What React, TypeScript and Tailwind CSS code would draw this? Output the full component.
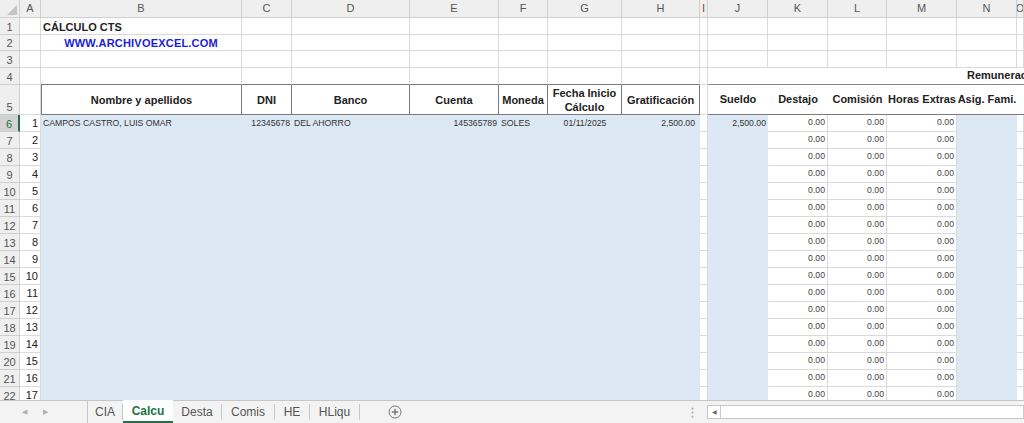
const COLS = ["A", "B", "C", "D", "E", "F", "G", "H", "I", "J", "K", "L", "M", "N", "O"];
const BLUE = new Set(["B", "C", "D", "E", "F", "G", "H", "J", "N"]);
const BOX = new Set(["B", "C", "D", "E", "F", "G", "H"]);
const REM = new Set(["J", "K", "L", "M", "N", "O"]);

const HEADERS: Record<string, string> = {
  B: "Nombre y apellidos",
  C: "DNI",
  D: "Banco",
  E: "Cuenta",
  F: "Moneda",
  G: "Fecha Inicio Cálculo",
  H: "Gratificación",
  J: "Sueldo",
  K: "Destajo",
  L: "Comisión",
  M: "Horas Extras",
  N: "Asig. Fami.",
};

const FIRST: Record<string, { text: string; align: string }> = {
  B: { text: "CAMPOS CASTRO, LUIS OMAR", align: "justify-start pl-[2px]" },
  C: { text: "12345678", align: "justify-end pr-[2px]" },
  D: { text: "DEL AHORRO", align: "justify-start pl-[2px]" },
  E: { text: "145365789", align: "justify-end pr-[2px]" },
  F: { text: "SOLES", align: "justify-start pl-[2px]" },
  G: { text: "01/11/2025", align: "justify-center" },
  H: { text: "2,500.00", align: "justify-end pr-[5px]" },
  J: { text: "2,500.00", align: "justify-end pr-[2px]" },
};

const rows = Array.from({ length: 22 }, (_, i) => i + 1);

const ColumnHeader = () => (
  <>
    <div className="relative border-r border-b border-[#cfcfcf] bg-[#efefef]">
      <div className="absolute right-[2px] bottom-[2px] h-0 w-0 border-l-[10px] border-t-[10px] border-l-transparent border-t-transparent border-b-[10px] border-b-[#c4c4c4]" />
    </div>
    {COLS.map((c) => (
      <div
        key={c}
        className="flex items-center justify-center overflow-hidden border-r border-b border-[#cfcfcf] bg-[#efefef] text-[11px] text-[#555]"
      >
        {c}
      </div>
    ))}
  </>
);

const RowHeader = ({ n }: { n: number }) => {
  const active = n === 6;
  return (
    <div
      className={`flex items-end justify-center border-b border-[#cfcfcf] pb-[1px] text-[11px] leading-none ${
        active
          ? "border-r-2 border-r-[#217346] bg-[#d3d3d3] text-[#217346]"
          : "border-r border-r-[#cfcfcf] bg-[#efefef] text-[#555]"
      }`}
    >
      {n}
    </div>
  );
};

const TopCell = ({ r, c }: { r: number; c: string }) => {
  if (r === 4 && c === "J") {
    return (
      <div
        style={{ gridColumn: "span 6" }}
        className="flex items-end overflow-hidden whitespace-nowrap border-b border-[#8a8a8a] pb-[1px] pl-[259px] text-[11px] font-bold text-[#222]"
      >
        Remuneraciones
      </div>
    );
  }
  if (r === 4 && REM.has(c)) return null;
  const bottom = r === 4 && BOX.has(c) ? "border-b-[#7a7a7a]" : "border-b-[#dadada]";
  let content: React.ReactNode = null;
  if (r === 1 && c === "B")
    content = (
      <span className="pl-[2px] text-[11px] font-bold text-[#222]">CÁLCULO CTS</span>
    );
  if (r === 2 && c === "B")
    content = (
      <span className="w-full text-center text-[11px] font-bold tracking-[0.2px] text-[#1c1cd8]">
        WWW.ARCHIVOEXCEL.COM
      </span>
    );
  return (
    <div
      className={`flex items-end border-r border-b border-r-[#dadada] pb-[1px] leading-none ${bottom}`}
    >
      {content}
    </div>
  );
};

const HeaderCell = ({ c }: { c: string }) => {
  if (c === "A")
    return <div className="border-r border-b border-[#dadada]" />;
  if (c === "I")
    return <div className="border-r border-b border-r-[#dadada] border-b-[#dadada]" />;
  const text = HEADERS[c];
  if (BOX.has(c)) {
    return (
      <div
        className={`flex items-center justify-center border-r border-b border-[#7a7a7a] px-[2px] text-center text-[11px] font-bold leading-[14px] text-[#222] ${
          c === "B" ? "border-l" : ""
        }`}
      >
        {text}
      </div>
    );
  }
  return (
    <div className="flex items-center justify-center whitespace-nowrap border-b border-[#7a7a7a] text-[11px] font-bold text-[#222]">
      {text ?? ""}
    </div>
  );
};

const DataCell = ({ r, c }: { r: number; c: string }) => {
  const idx = r - 5;
  if (c === "A") {
    return (
      <div className="flex items-center justify-end border-r border-b border-[#dadada] pr-[2px] text-[11px] text-[#222]">
        {idx}
      </div>
    );
  }
  if (BLUE.has(c)) {
    const f = r === 6 ? FIRST[c] : undefined;
    return (
      <div
        className={`flex items-center whitespace-nowrap bg-[#dce8f4] text-[8.7px] text-[#333] ${
          f ? f.align : ""
        }`}
      >
        {f?.text}
      </div>
    );
  }
  if (c === "K" || c === "L" || c === "M") {
    return (
      <div className="flex items-center justify-end border-r border-b border-[#dadada] pr-[2px] text-[8.7px] text-[#444]">
        0.00
      </div>
    );
  }
  return <div className="border-r border-b border-[#dadada]" />;
};

const Tabs = () => {
  const tabs = ["CIA", "Calcu", "Desta", "Comis", "HE", "HLiqu"];
  const widths: Record<string, string> = {
    CIA: "w-[35px]",
    Calcu: "w-[50px]",
    Desta: "w-[49px]",
    Comis: "w-[53px]",
    HE: "w-[35px]",
    HLiqu: "w-[50px]",
  };
  return (
    <div className="flex h-[23px] shrink-0 items-stretch border-t border-[#c6c6c6] bg-[#f3f3f3] text-[12px]">
      <div className="flex w-[87px] items-center gap-[16px] pl-[22px] text-[7px] text-[#b0b0b0]">
        <span>◀</span>
        <span>▶</span>
      </div>
      <div className="flex items-stretch border-l border-[#c6c6c6]">
        {tabs.map((t) =>
          t === "Calcu" ? (
            <div
              key={t}
              className={`-mt-px flex items-center justify-center border-b-2 border-[#217346] bg-white font-bold text-[#217346] ${widths[t]}`}
            >
              {t}
            </div>
          ) : (
            <div
              key={t}
              className={`my-[3px] flex items-center justify-center border-r border-[#c6c6c6] text-[#555] ${widths[t]}`}
            >
              {t}
            </div>
          )
        )}
      </div>
      <div className="flex w-[70px] items-center justify-center">
        <svg width="14" height="14" viewBox="0 0 14 14" fill="none" stroke="#777" strokeWidth="1">
          <circle cx="7" cy="7" r="6" />
          <path d="M7 3.8v6.4M3.8 7h6.4" strokeWidth="1.4" />
        </svg>
      </div>
      <div className="flex flex-1 items-center justify-end pr-[13px]">
        <svg width="3" height="11" viewBox="0 0 3 11" fill="#a8a8a8">
          <circle cx="1.5" cy="1.5" r="1" />
          <circle cx="1.5" cy="5.5" r="1" />
          <circle cx="1.5" cy="9.5" r="1" />
        </svg>
      </div>
      <div className="flex w-[317px] items-center">
        <div className="flex h-[14px] flex-1 items-stretch border border-[#c8c8c8] bg-white">
          <div className="flex w-[13px] items-center justify-center border-r border-[#c8c8c8] text-[6px] text-[#666]">
            ◀
          </div>
          <div className="flex-1" />
        </div>
      </div>
    </div>
  );
};

export default function App() {
  return (
    <div
      className="flex h-screen w-full flex-col overflow-hidden bg-white"
      style={{ fontFamily: '"Liberation Sans", Arial, sans-serif' }}
    >
      <div className="grid flex-1 grid-cols-[20px_21px_201px_50px_118px_89px_49px_74px_78px_8px_60px_60px_59px_70px_60px_1fr] grid-rows-[18px_17px_16px_17px_17px_30px_repeat(17,17px)] overflow-hidden">
        <ColumnHeader />
        {rows.map((r) => (
          <div key={r} className="contents">
            <RowHeader n={r} />
            {COLS.map((c) => {
              if (r <= 4) return <TopCell key={c} r={r} c={c} />;
              if (r === 5) return <HeaderCell key={c} c={c} />;
              return <DataCell key={c} r={r} c={c} />;
            })}
          </div>
        ))}
      </div>
      <Tabs />
    </div>
  );
}
